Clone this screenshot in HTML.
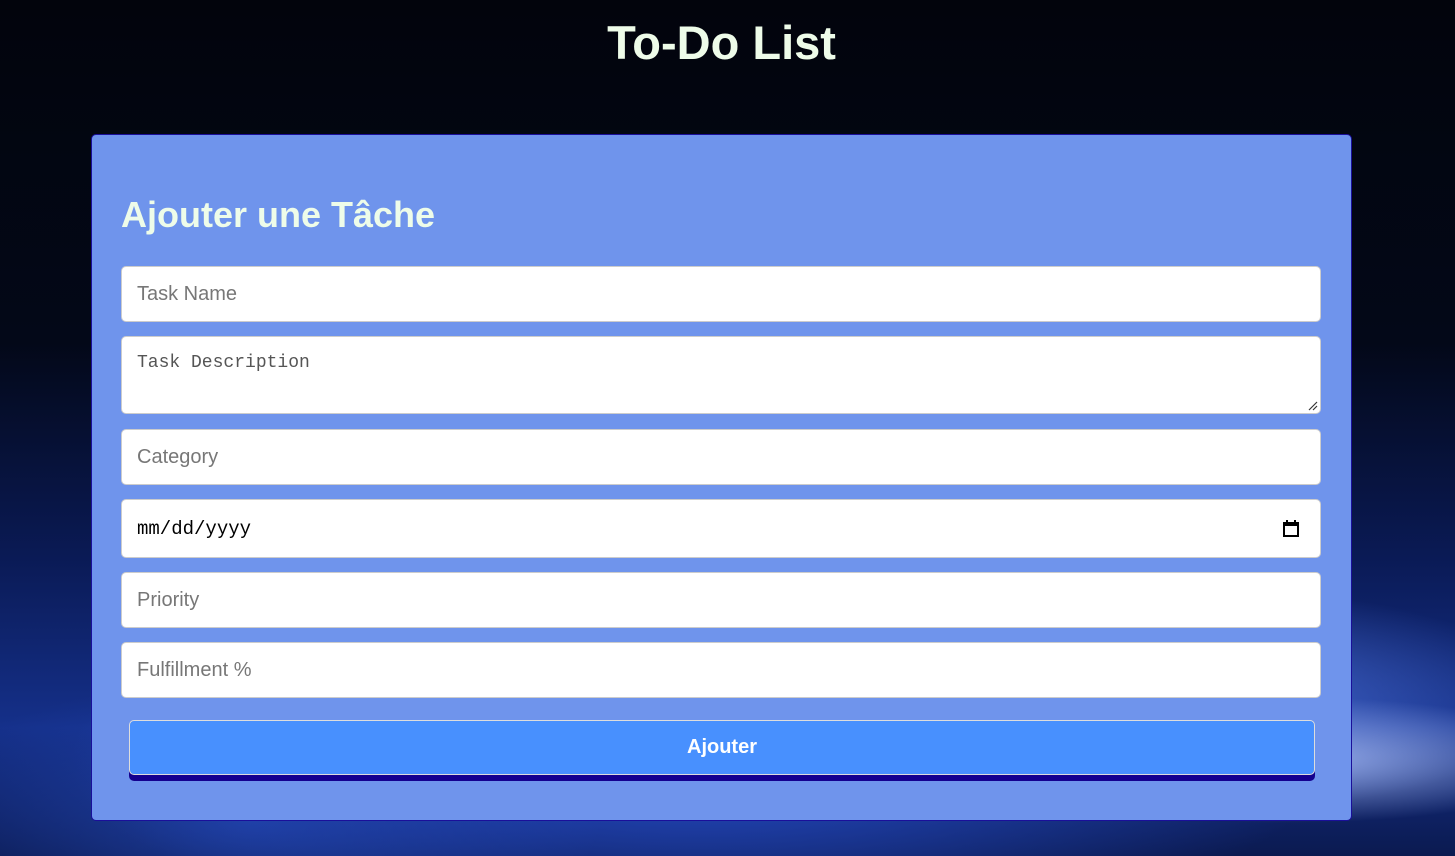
<!DOCTYPE html>
<html><head><meta charset="utf-8"><style>
*{box-sizing:border-box}
body{margin:0;width:1455px;height:856px;overflow:hidden;font-family:"Liberation Sans",Arial,sans-serif;
background:
radial-gradient(ellipse 420px 90px at 1290px 760px,rgba(180,200,255,.8),transparent 70%),
radial-gradient(ellipse 500px 160px at 1200px 700px,rgba(90,130,240,.7),transparent 70%),
radial-gradient(ellipse 900px 260px at 700px 760px,rgba(40,80,210,.9),transparent 70%),
radial-gradient(ellipse 500px 200px at 250px 820px,rgba(40,80,200,.6),transparent 70%),
linear-gradient(#02040c 0%,#030818 40%,#0a1a55 65%,#15308a 85%,#0b1a50 100%);position:relative}
h1{position:absolute;top:15px;left:-6px;width:100%;text-align:center;margin:0;font-size:47px;color:#eefce9;font-weight:bold}
.card{position:absolute;left:91px;top:134px;width:1261px;height:687px;background:#6f94ec;border:1px solid #1a0f9a;border-radius:5px}
h2{position:absolute;left:29px;top:59px;margin:0;font-size:36px;color:#eefce9}
.f{position:absolute;left:29px;width:1200px;background:#fff;border:1px solid #ccc;border-radius:5px;font-size:20px;color:#777;padding-left:15px;display:flex;align-items:center}
.btn{position:absolute;left:37px;top:585px;width:1186px;height:55px;background:#4890fe;border:1px solid #ddd;border-radius:5px;box-shadow:0 6px 0 #14008f;color:#fff;font-weight:bold;font-size:20px;text-align:center;line-height:53px}
</style></head><body>
<h1>To-Do List</h1>
<div class="card">
<h2>Ajouter une Tâche</h2>
<div class="f" style="top:131px;height:56px">Task Name</div>
<div class="f" style="top:201px;height:78px;align-items:flex-start;padding-top:16px;font-family:'Liberation Mono',monospace;font-size:18px;color:#555">Task Description
<svg style="position:absolute;right:2px;bottom:2px" width="12" height="12"><path d="M11 3L3 11M11 7L7 11" stroke="#333" stroke-width="1.2"/></svg></div>
<div class="f" style="top:294px;height:56px">Category</div>
<div class="f" style="top:364px;height:59px;font-family:'Liberation Mono',monospace;color:#000;font-size:19px">mm/dd/yyyy
<svg style="position:absolute;right:20px;top:19px" width="18" height="19"><rect x="2" y="4" width="14" height="13" fill="none" stroke="#000" stroke-width="2"/><rect x="2" y="4" width="14" height="3" fill="#000"/><path d="M5 1v4M13 1v4" stroke="#000" stroke-width="2"/></svg></div>
<div class="f" style="top:437px;height:56px">Priority</div>
<div class="f" style="top:507px;height:56px">Fulfillment %</div>
<div class="btn">Ajouter</div>
</div>
</body></html>
